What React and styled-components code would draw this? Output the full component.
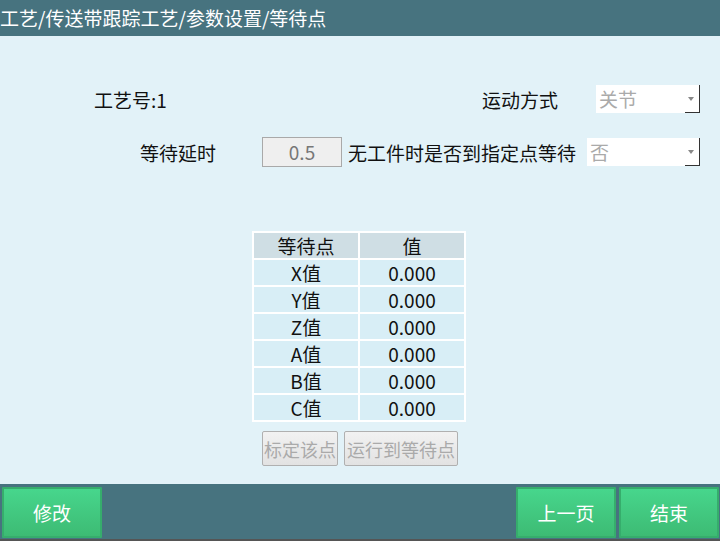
import React from "react";
import styled, { createGlobalStyle } from "styled-components";

const Global = createGlobalStyle`
  html, body {
    margin: 0;
    padding: 0;
    width: 720px;
    height: 541px;
    overflow: hidden;
    font-family: "Noto Sans CJK SC", "Noto Sans", sans-serif;
  }
`;

const Screen = styled.div`
  width: 720px;
  height: 541px;
  display: flex;
  flex-direction: column;
  background: #e2f2f8;
`;

const TitleBar = styled.div`
  height: 36px;
  background: #47737f;
  color: #fff;
  font-size: 19px;
  line-height: 36px;
  white-space: nowrap;
`;

const Content = styled.div`
  flex: 1;
  display: flex;
  flex-direction: column;
  padding-top: 49px;
`;

const Row = styled.div`
  display: flex;
  align-items: center;
  padding-left: ${(p) => p.left}px;
  padding-right: 20px;
  height: ${(p) => p.h}px;
  margin-bottom: ${(p) => p.mb || 0}px;
  font-size: 19px;
  color: #111;
`;

const Label = styled.div`
  width: ${(p) => (p.w ? p.w + "px" : "auto")};
  flex: ${(p) => (p.grow ? 1 : "none")};
  margin-right: ${(p) => p.mr || 0}px;
  white-space: nowrap;
`;

const Input = styled.div`
  box-sizing: border-box;
  width: 80px;
  height: 30px;
  background: #efefef;
  border: 1px solid #a9a9a9;
  color: #777;
  text-align: center;
  line-height: 28px;
  font-size: 19px;
  margin-right: 6px;
`;

const Combo = styled.div`
  position: relative;
  box-sizing: border-box;
  width: ${(p) => p.w}px;
  height: 28px;
  background: #fff;
  color: #aaa;
  font-size: 19px;
  line-height: 28px;
  padding-left: 3px;
  margin-left: auto;
`;

const Arrow = styled.div`
  position: absolute;
  right: 0;
  top: 0;
  bottom: 0;
  width: 15px;
  border-right: 1px solid #333;
  border-bottom: 1px solid #333;
  box-sizing: border-box;
  &::after {
    content: "";
    position: absolute;
    right: 5px;
    top: 12px;
    border-left: 3px solid transparent;
    border-right: 3px solid transparent;
    border-top: 4px solid #888;
  }
`;

const TableWrap = styled.div`
  align-self: flex-start;
  margin-left: 252px;
  margin-top: 64px;
`;

const Table = styled.table`
  border-collapse: separate;
  border-spacing: 2px;
  background: #fff;
  font-size: 19px;
  color: #111;
`;

const Cell = styled.td`
  width: ${(p) => p.w}px;
  height: 25px;
  padding: 0;
  text-align: center;
  line-height: 25px;
  background: ${(p) => (p.head ? "#cfdee4" : "#d8eef6")};
`;

const Actions = styled.div`
  display: flex;
  gap: 6px;
  margin-left: 262px;
  margin-top: 9px;
`;

const GrayButton = styled.button`
  box-sizing: border-box;
  width: ${(p) => p.w}px;
  height: 35px;
  padding: 0;
  border: 1px solid #b0b0b0;
  border-radius: 2px;
  background: linear-gradient(#f2f2f2, #e2e2e2);
  color: #aaa;
  font-family: inherit;
  font-size: 18px;
  white-space: nowrap;
  display: flex;
  align-items: center;
  justify-content: center;
`;

const Footer = styled.div`
  height: 57px;
  box-sizing: border-box;
  background: #47737f;
  display: flex;
  align-items: flex-start;
  padding: 3px 1px 0 2px;
  gap: 3px;
  border-bottom: 2px solid #555;
`;

const GreenButton = styled.button`
  box-sizing: border-box;
  width: 100px;
  height: 51px;
  margin-left: ${(p) => (p.push ? "auto" : "0")};
  border: 2px solid #36ad6c;
  border-radius: 1px;
  background: linear-gradient(#47d68c, #3dbb74);
  color: #fff;
  font-family: inherit;
  font-size: 19px;
`;

const rows = ["X", "Y", "Z", "A", "B", "C"];

export default function App() {
  return (
    <Screen>
      <Global />
      <TitleBar>工艺/传送带跟踪工艺/参数设置/等待点</TitleBar>
      <Content>
        <Row left={94} h={28} mb={24}>
          <Label grow>工艺号:1</Label>
          <Label mr={38}>运动方式</Label>
          <Combo w={104}>
            关节
            <Arrow />
          </Combo>
        </Row>
        <Row left={140} h={30}>
          <Label w={122}>等待延时</Label>
          <Input>0.5</Input>
          <Label>无工件时是否到指定点等待</Label>
          <Combo w={113}>
            否
            <Arrow />
          </Combo>
        </Row>
        <TableWrap>
          <Table>
            <tbody>
              <tr>
                <Cell head w={104}>等待点</Cell>
                <Cell head w={104}>值</Cell>
              </tr>
              {rows.map((r) => (
                <tr key={r}>
                  <Cell w={104}>{r}值</Cell>
                  <Cell w={104}>0.000</Cell>
                </tr>
              ))}
            </tbody>
          </Table>
        </TableWrap>
        <Actions>
          <GrayButton w={76}>标定该点</GrayButton>
          <GrayButton w={114}>运行到等待点</GrayButton>
        </Actions>
      </Content>
      <Footer>
        <GreenButton>修改</GreenButton>
        <GreenButton push>上一页</GreenButton>
        <GreenButton>结束</GreenButton>
      </Footer>
    </Screen>
  );
}
